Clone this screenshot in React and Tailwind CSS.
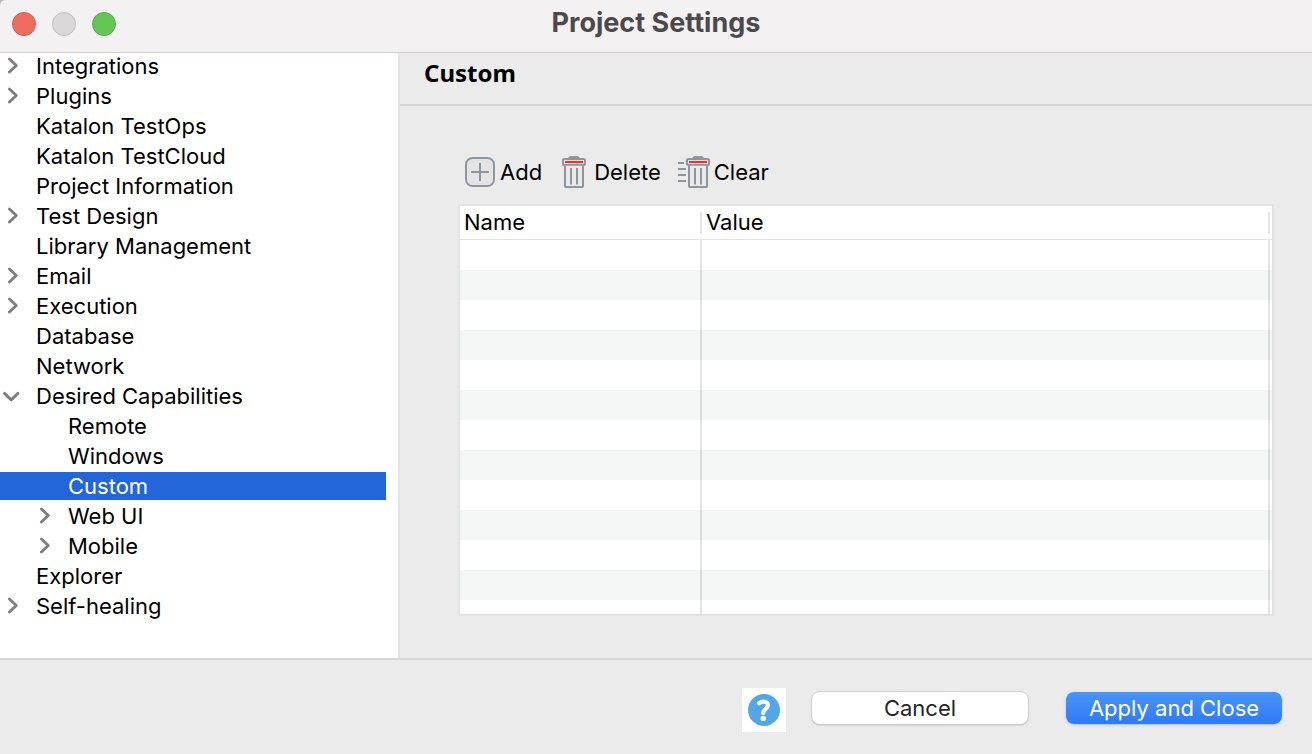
import React from "react";

const tree = [
  { label: "Integrations", state: "closed" },
  { label: "Plugins", state: "closed" },
  { label: "Katalon TestOps" },
  { label: "Katalon TestCloud" },
  { label: "Project Information" },
  { label: "Test Design", state: "closed" },
  { label: "Library Management" },
  { label: "Email", state: "closed" },
  { label: "Execution", state: "closed" },
  { label: "Database" },
  { label: "Network" },
  { label: "Desired Capabilities", state: "open" },
  { label: "Remote", child: true },
  { label: "Windows", child: true },
  { label: "Custom", child: true, selected: true },
  { label: "Web UI", child: true, state: "closed" },
  { label: "Mobile", child: true, state: "closed" },
  { label: "Explorer" },
  { label: "Self-healing", state: "closed" },
];

const emptyRows = Array.from({ length: 13 }, (_, i) => i);

function Chevron({ state }) {
  return (
    <svg
      aria-hidden="true"
      className="h-[28px] w-[36px] shrink-0"
      viewBox="0 0 36 28"
      fill="none"
      stroke="#7f7f7f"
      strokeWidth="2.9"
      strokeLinecap="round"
      strokeLinejoin="round"
    >
      {state === "closed" && <path d="M9.4 7 L16.3 13.5 L9.4 20" />}
      {state === "open" && <path d="M4.5 11.4 L11.2 17.9 L17.9 11.4" />}
    </svg>
  );
}

function TreeItem({ item }) {
  return (
    <li
      role="treeitem"
      aria-selected={!!item.selected}
      className={item.selected ? "bg-[#2465da] text-white" : "text-black"}
    >
      <button
        type="button"
        className={
          "flex h-[28px] w-full items-center text-left " +
          (item.child ? "pl-[32px]" : "pl-0")
        }
      >
        <Chevron state={item.state} />
        {item.label}
      </button>
    </li>
  );
}

function AddIcon() {
  return (
    <svg aria-hidden="true" className="h-[32px] w-[32px]" viewBox="0 0 32 32" fill="none" stroke="#8f959f">
      <rect x="2" y="2" width="28" height="28" rx="6.5" fill="#e4e4e6" strokeWidth="2" />
      <path d="M16 7 V25 M7 16 H25" strokeWidth="2" />
    </svg>
  );
}

function TrashShape() {
  return (
    <>
      <path d="M6.5 2.2 L8 0.6 H16 L17.5 2.2 Z" fill="#8a919c" strokeWidth="1" />
      <rect x="1" y="3" width="22" height="6" rx="1.4" fill="#f5f1f2" strokeWidth="2.2" />
      <path d="M3 6 H21" stroke="#f0302c" strokeWidth="2.2" />
      <path d="M3 9.8 V30.2 Q3 31 3.8 31 H20.2 Q21 31 21 30.2 V9.8" fill="#eaeaeb" strokeWidth="2" />
      <path d="M9 12 V28.5 M15 12 V28.5" strokeWidth="2" />
    </>
  );
}

function DeleteIcon() {
  return (
    <svg aria-hidden="true" className="h-[32px] w-[24px]" viewBox="0 0 24 32" fill="none" stroke="#8f959f">
      <TrashShape />
    </svg>
  );
}

function ClearIcon() {
  return (
    <svg aria-hidden="true" className="h-[32px] w-[32px]" viewBox="0 0 32 32" fill="none" stroke="#8f959f">
      <path d="M0 7 H6 M0 13 H8 M0 19 H8 M0 25 H8" strokeWidth="1.8" />
      <g transform="translate(8 0)">
        <TrashShape />
      </g>
    </svg>
  );
}

function HelpIcon() {
  return (
    <svg aria-hidden="true" className="h-[32px] w-[32px]" viewBox="0 0 32 32" fill="none">
      <circle cx="16" cy="16" r="16" fill="#52a7e8" />
      <path
        d="M11.2 9.2 C12.4 8.2 13.8 7.6 15.6 7.6 C18.4 7.6 20 9 19.9 11.4 C19.8 14.8 15.2 15 15.2 19"
        stroke="#fff"
        strokeWidth="4.2"
        strokeLinecap="round"
        strokeLinejoin="round"
      />
      <circle cx="15.2" cy="24.4" r="2.7" fill="#fff" />
    </svg>
  );
}

export default function App() {
  return (
    <div className="h-screen overflow-hidden bg-[#b9b9b6]">
      <div className="flex h-full flex-col overflow-hidden rounded-tl-md bg-[#ebebeb] font-['Inter',sans-serif] text-[22px] leading-[28px] text-black">
        <header className="relative z-10 grid h-[52px] shrink-0 grid-cols-[1fr_auto_1fr] items-center bg-[#f4f1f3] px-[12px] pb-[4px] shadow-[0_1px_0_#cfcdce]">
          <div className="flex gap-[16px]">
            <button type="button" aria-label="Close" className="size-[24px] rounded-full border border-[#dc5a4e] bg-[#ed6b60]" />
            <button type="button" aria-label="Minimize" className="size-[24px] rounded-full border border-[#c2c0c1] bg-[#dad8d9]" />
            <button type="button" aria-label="Zoom" className="size-[24px] rounded-full border border-[#57b048] bg-[#62c655]" />
          </div>
          <h1 className="pb-[2px] text-[27px] font-bold text-[#4b494a]">Project Settings</h1>
        </header>

        <div className="flex min-h-0 flex-1">
          <nav aria-label="Settings" className="w-[400px] shrink-0 border-r-2 border-[#e3e3e3] bg-white pr-[12px]">
            <ul role="tree" className="flex flex-col gap-[2px]">
              {tree.map((item) => (
                <TreeItem key={item.label} item={item} />
              ))}
            </ul>
          </nav>

          <main className="flex min-w-0 flex-1 flex-col">
            <div className="flex h-[54px] shrink-0 items-center border-b-2 border-[#d5d5d5] pb-[10px] pl-[24px]">
              <h2 className="font-['Noto_Sans',sans-serif] text-[24px] font-bold">Custom</h2>
            </div>
            <div className="flex min-h-0 flex-1 flex-col gap-[16px] pt-[50px] pr-[38px] pb-[42px] pl-[58px]">
              <div role="toolbar" aria-label="Capabilities" className="flex gap-[17px] pl-[6px]">
                <button type="button" className="flex items-center gap-[4px]">
                  <AddIcon />
                  Add
                </button>
                <button type="button" className="flex items-center gap-[8px] pl-[3px]">
                  <DeleteIcon />
                  Delete
                </button>
                <button type="button" className="flex items-center gap-[4px]">
                  <ClearIcon />
                  Clear
                </button>
              </div>

              <div className="min-h-0 flex-1 overflow-hidden border-2 border-[#e3e3e3] bg-white">
                <table className="w-full table-fixed border-separate border-spacing-0 text-left">
                  <colgroup>
                    <col className="w-[242px]" />
                    <col />
                    <col className="w-[2px]" />
                  </colgroup>
                  <thead>
                    <tr>
                      <th scope="col" className="h-[34px] border-b border-[#e3e3e3] p-0 font-normal">
                        <div className="h-[22px] border-r-2 border-[#e3e3e3] pl-[4px] leading-[20px]">Name</div>
                      </th>
                      <th scope="col" className="h-[34px] border-b border-[#e3e3e3] p-0 font-normal">
                        <div className="h-[22px] border-r-2 border-[#e3e3e3] pl-[4px] leading-[20px]">Value</div>
                      </th>
                      <td className="border-b border-[#e3e3e3] p-0" />
                    </tr>
                  </thead>
                  <tbody>
                    {emptyRows.map((row) => (
                      <tr key={row} className="border-[#e3e3e3] even:border-[#d9dbdb] even:bg-[#f4f5f5]">
                        <td className="h-[30px] border-r-2 border-inherit p-0" />
                        <td className="h-[30px] border-r-2 border-inherit p-0" />
                        <td className="p-0" />
                      </tr>
                    ))}
                  </tbody>
                </table>
              </div>
            </div>
          </main>
        </div>

        <footer className="flex shrink-0 items-center justify-end border-t-2 border-[#d5d5d5] pt-[28px] pr-[30px] pb-[22px]">
          <button type="button" aria-label="Help" className="flex size-[44px] items-center justify-center bg-white">
            <HelpIcon />
          </button>
          <div className="flex gap-[38px] pb-[4px] pl-[26px]">
            <button type="button" className="h-[32px] w-[216px] rounded-[8px] bg-white text-[#252525] shadow-[0_0_1px_1px_#d2d2d2,0_1px_2px_#a0a0a0]">
              Cancel
            </button>
            <button type="button" className="h-[32px] w-[216px] rounded-[8px] bg-linear-to-b from-[#4a93f9] to-[#2e7af6] text-white shadow-[0_1px_3px_#a9c3ee]">
              Apply and Close
            </button>
          </div>
        </footer>
      </div>
    </div>
  );
}
